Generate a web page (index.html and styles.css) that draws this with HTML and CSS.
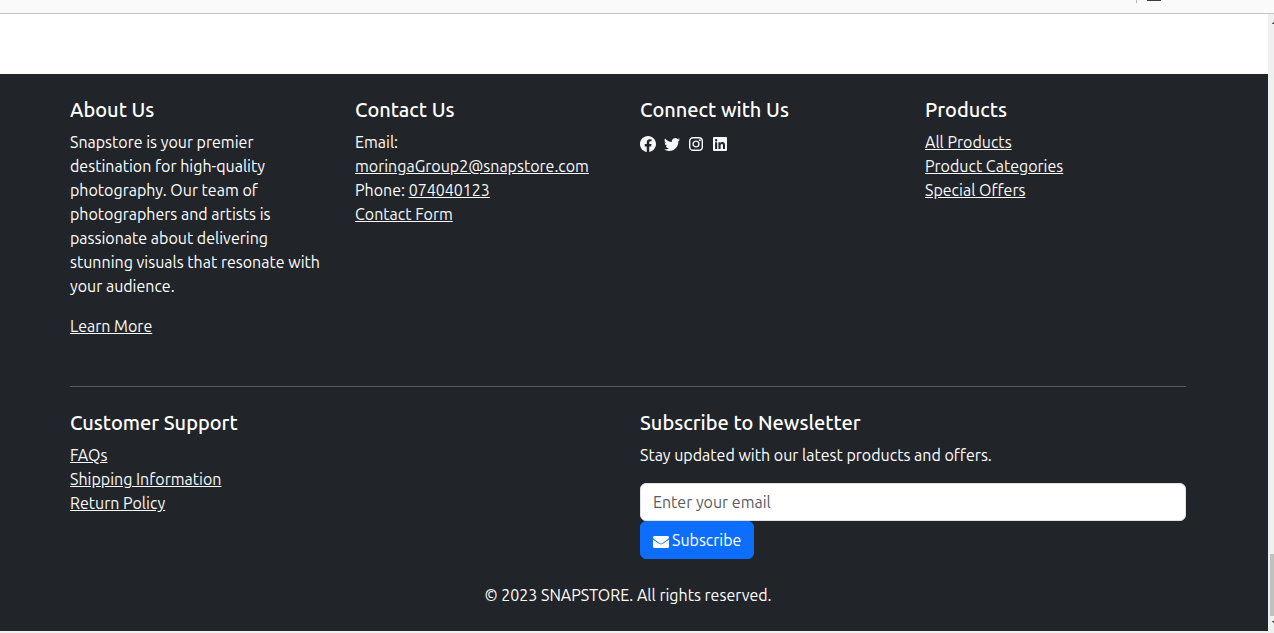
FILE: index.html
```html
<!DOCTYPE html>
<html lang="en">
<head>
<meta charset="utf-8">
<title>Snapstore</title>
<link rel="stylesheet" href="styles.css">
</head>
<body>
<div class="toolbar">
  <span class="toolbar-divider"></span>
  <span class="toolbar-icon"></span>
</div>
<div class="viewport">
  <div class="page">
    <main class="content"></main>
    <footer class="footer">
      <div class="container">
        <div class="row">
          <section class="col">
            <h5>About Us</h5>
            <p>Snapstore is your premier destination for high-quality photography. Our team of photographers and artists is passionate about delivering stunning visuals that resonate with your audience.</p>
            <a href="#">Learn More</a>
          </section>
          <section class="col">
            <h5>Contact Us</h5>
            <ul>
              <li>Email: <a href="#">moringaGroup2@snapstore.com</a></li>
              <li>Phone: <a href="#">074040123</a></li>
              <li><a href="#">Contact Form</a></li>
            </ul>
          </section>
          <section class="col">
            <h5>Connect with Us</h5>
            <div class="social">
              <a href="#" aria-label="Facebook"><svg viewBox="0 0 16 16"><path d="M16 8.049c0-4.446-3.582-8.05-8-8.05C3.58 0-.002 3.603-.002 8.05c0 4.017 2.926 7.347 6.75 7.951v-5.625h-2.03V8.05H6.75V6.275c0-2.017 1.195-3.131 3.022-3.131.876 0 1.791.157 1.791.157v1.98h-1.009c-.993 0-1.303.621-1.303 1.258v1.51h2.218l-.354 2.326H9.25V16c3.824-.604 6.75-3.934 6.75-7.951z"/></svg></a>
              <a href="#" aria-label="Twitter"><svg viewBox="0 0 16 16"><path d="M5.026 15c6.038 0 9.341-5.003 9.341-9.334 0-.14 0-.282-.006-.422A6.685 6.685 0 0 0 16 3.542a6.658 6.658 0 0 1-1.889.518 3.301 3.301 0 0 0 1.447-1.817 6.533 6.533 0 0 1-2.087.793A3.286 3.286 0 0 0 7.875 6.03a9.325 9.325 0 0 1-6.767-3.429 3.289 3.289 0 0 0 1.018 4.382A3.323 3.323 0 0 1 .64 6.575v.045a3.288 3.288 0 0 0 2.632 3.218 3.203 3.203 0 0 1-.865.115 3.23 3.23 0 0 1-.614-.057 3.283 3.283 0 0 0 3.067 2.277A6.588 6.588 0 0 1 .78 13.58a6.32 6.32 0 0 1-.78-.045A9.344 9.344 0 0 0 5.026 15z"/></svg></a>
              <a href="#" aria-label="Instagram"><svg viewBox="0 0 16 16"><g fill="none" stroke="currentColor" stroke-width="1.4"><rect x="1.700" y="1.700" width="12.600" height="12.600" rx="3.4"/><circle cx="8" cy="8" r="2.900"/></g><circle cx="11.8" cy="4.2" r="1"/></svg></a>
              <a href="#" aria-label="LinkedIn"><svg viewBox="0 0 16 16"><path fill-rule="evenodd" d="M2 1h12a1 1 0 0 1 1 1v12a1 1 0 0 1-1 1H2a1 1 0 0 1-1-1V2a1 1 0 0 1 1-1zM3.1 6.3V13h2.1V6.3zM4.150 3a1.200 1.200 0 1 0 0 2.400a1.200 1.200 0 0 0 0-2.400zM6.500 6.300V13h2.100V9.600c0-.9.300-1.700 1.200-1.700s1.200.7 1.200 1.700V13H13V9.200c0-2-.8-3.100-2.500-3.100-1 0-1.600.5-1.900 1.100V6.300z"/></svg></a>
            </div>
          </section>
          <section class="col">
            <h5>Products</h5>
            <ul>
              <li><a href="#">All Products</a></li>
              <li><a href="#">Product Categories</a></li>
              <li><a href="#">Special Offers</a></li>
            </ul>
          </section>
        </div>
        <hr>
        <div class="row">
          <section class="col">
            <h5>Customer Support</h5>
            <ul>
              <li><a href="#">FAQs</a></li>
              <li><a href="#">Shipping Information</a></li>
              <li><a href="#">Return Policy</a></li>
            </ul>
          </section>
          <section class="col">
            <h5>Subscribe to Newsletter</h5>
            <p>Stay updated with our latest products and offers.</p>
            <form>
              <input class="email" type="email" placeholder="Enter your email" aria-label="Email address">
              <button class="subscribe" type="button"><svg viewBox="0 0 16 16"><path d="M1.500 4h13A1.500 1.500 0 0 1 16 5.300Q15.900 6.500 14.800 7.300L9.600 10.900Q8 12 6.400 10.900L1.200 7.300Q.1 6.500 0 5.300A1.500 1.500 0 0 1 1.500 4z"/><path d="M0 7.500Q.4 7.900 .9 8.200L5.800 11.600Q8 13.200 10.200 11.600L15.100 8.200Q15.600 7.900 16 7.500v7a1.500 1.500 0 0 1-1.500 1.500h-13A1.500 1.500 0 0 1 0 14.500z"/></svg>Subscribe</button>
            </form>
          </section>
        </div>
        <p class="copyright">© 2023 SNAPSTORE. All rights reserved.</p>
      </div>
    </footer>
  </div>
  <div class="scrollbar">
    <svg class="arrow" viewBox="0 0 6 12"><path d="M4 10V9h1V8h1v2z"/></svg>
    <div class="thumb"></div>
    <svg class="arrow" viewBox="0 0 6 12"><path d="M4 5h2v2H5V6H4z"/></svg>
  </div>
</div>
</body>
</html>
```
FILE: styles.css
```css
* { box-sizing: border-box; }

body {
  margin: 0;
  min-height: 100vh;
  display: flex;
  flex-direction: column;
  background: #f0f0f0;
  color: #fff;
  font: 16px/24px Ubuntu, "Noto Sans", sans-serif;
}

.toolbar {
  height: 14px;
  display: flex;
  justify-content: flex-end;
  align-items: flex-start;
  gap: 10px;
  padding-right: 113px;
  background: #fafafa;
  border-bottom: 1px solid #c4c4c4;
}
.toolbar-divider { width: 1px; height: 3px; background: #bbb; }
.toolbar-icon { width: 14px; height: 1px; background: #3c3c3c; }

.viewport { flex: 1; display: flex; }
.page { flex: 1; min-width: 0; padding-bottom: 2px; }
.content { height: 60px; background: #fff; }

.footer { padding: 24px 12px 24px 0; background: #212529; }
.container { max-width: 1140px; margin: 0 auto; padding: 0 12px; }
.row { display: flex; gap: 24px; }
.col { flex: 1 1 0; min-width: 0; }

h5 { margin: 0 0 8px; font-size: 20px; line-height: 24px; font-weight: 500; }
p { margin: 0 0 16px; }
ul { margin: 0; padding: 0; list-style: none; }
a { color: #f8f9fa; }
hr { margin: 48px 0 24px; border: 0; border-top: 1px solid #585b5e; }

svg { width: 16px; height: 16px; fill: currentColor; }
.social { display: flex; gap: 8px; padding-top: 6px; }
.social a { display: flex; }

.email {
  display: block;
  width: 100%;
  height: 38px;
  padding: 6px 12px;
  border: 1px solid #dee2e6;
  border-radius: 6px;
  background: #fff;
  color: #212529;
  font: inherit;
}
.email::placeholder { color: #595c5f; opacity: 1; }

.subscribe {
  display: flex;
  align-items: center;
  gap: 3px;
  height: 38px;
  padding: 0 12px;
  border: 1px solid #0d6efd;
  border-radius: 6px;
  background: #0d6efd;
  color: #fff;
  font: inherit;
}

.copyright { margin: 24px 0 0; text-align: center; }

.scrollbar {
  width: 6px;
  display: flex;
  flex-direction: column;
  background: #f0f0f0;
}
.arrow { width: 6px; height: 12px; fill: #555; }
.thumb { height: 62px; margin: auto 0 0 2px; background: #c1c1c1; }
.thumb + .arrow { margin-bottom: 5px; }
```
